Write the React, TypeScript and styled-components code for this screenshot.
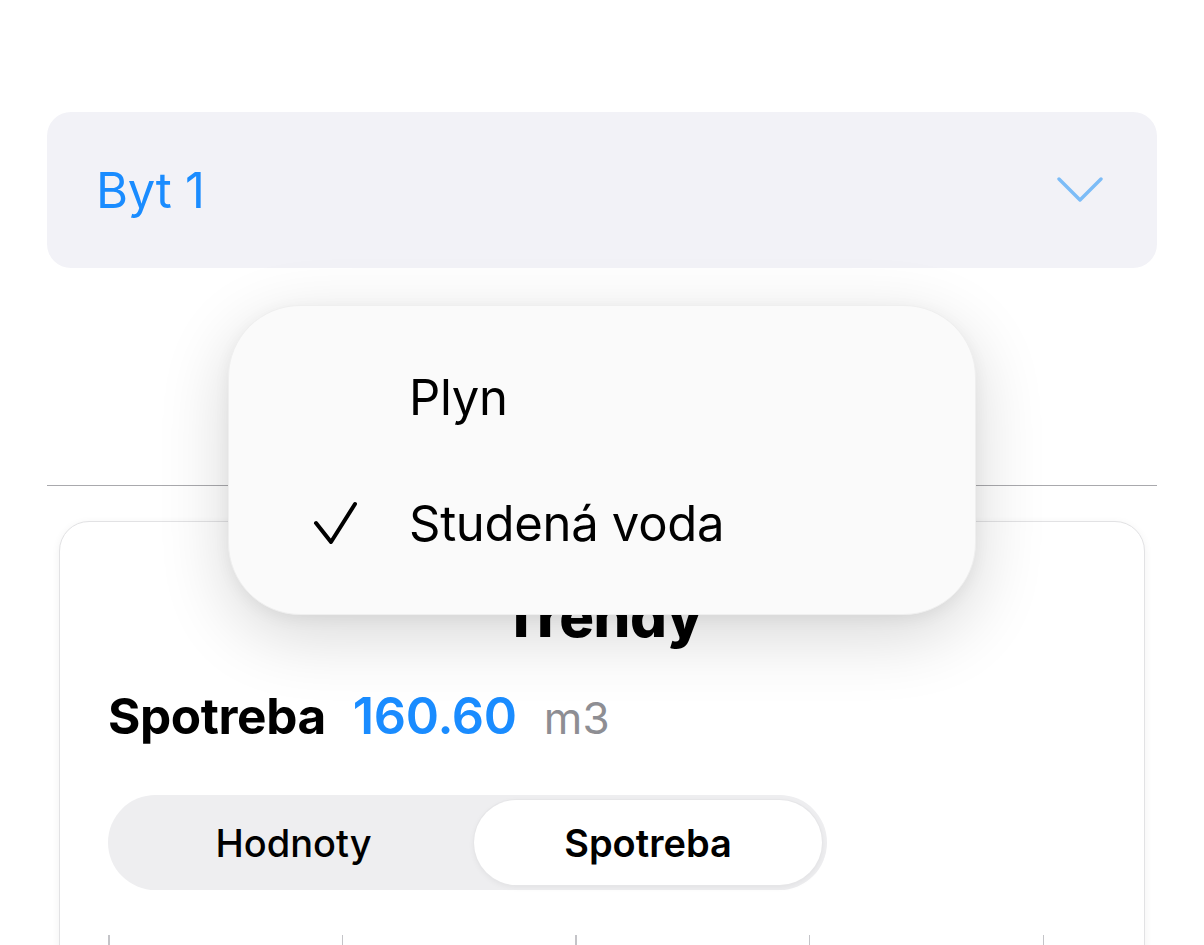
import React, { useState } from 'react';
import styled, { createGlobalStyle } from 'styled-components';

const GlobalStyle = createGlobalStyle`
  html, body {
    margin: 0;
    padding: 0;
    background: #ffffff;
    font-family: Inter, "Noto Sans", sans-serif;
    -webkit-font-smoothing: antialiased;
  }
`;

const Page = styled.div`
  position: relative;
  width: 1204px;
  height: 945px;
  overflow: hidden;
  box-sizing: border-box;
  padding: 112px 47px 0 47px;
  display: flex;
  flex-direction: column;
  & > * {
    flex-shrink: 0;
  }
`;

const Select = styled.div`
  height: 156px;
  border-radius: 24px;
  background: #f2f2f7;
  display: flex;
  align-items: center;
  justify-content: space-between;
  padding: 0 54px 0 49px;
`;

const SelectValue = styled.span`
  font-size: 49px;
  color: #1a8cff;
  letter-spacing: -0.3px;
`;

const Divider = styled.div`
  height: 1px;
  background: #a9a9ad;
  margin-top: 217px;
`;

const Card = styled.div`
  margin: 35px 12px 0 12px;
  background: #ffffff;
  border: 1.5px solid #e2e2e4;
  border-radius: 30px;
  box-shadow: 0 2px 8px rgba(0, 0, 0, 0.06);
  padding: 60px 48px 0 48px;
  display: flex;
  flex-direction: column;
  height: 600px;
`;

const CardTitle = styled.h2`
  margin: 0;
  text-align: center;
  font-size: 58px;
  font-weight: 800;
  line-height: 68px;
  color: #000;
  letter-spacing: -0.5px;
`;

const StatRow = styled.div`
  display: flex;
  align-items: baseline;
  gap: 27px;
  margin-top: 35px;
`;

const StatLabel = styled.span`
  font-size: 49.5px;
  font-weight: 700;
  color: #000;
  letter-spacing: -0.4px;
`;

const StatValue = styled.span`
  font-size: 50.5px;
  font-weight: 600;
  color: #1a8cff;
  letter-spacing: -0.3px;
`;

const StatUnit = styled.span`
  font-size: 44px;
  color: #8e8e93;
`;

const Segmented = styled.div`
  margin-top: 49px;
  width: 719px;
  height: 95px;
  box-sizing: border-box;
  border-radius: 48px;
  background: #eeeef0;
  padding: 5px;
  display: grid;
  grid-template-columns: 361fr 348fr;
`;

const Segment = styled.button<{ $active?: boolean }>`
  border: none;
  border-radius: 43px;
  font-family: inherit;
  font-size: 38px;
  font-weight: ${(p) => (p.$active ? 600 : 500)};
  color: #000;
  background: ${(p) => (p.$active ? '#ffffff' : 'transparent')};
  box-shadow: ${(p) => (p.$active ? '0 0 0 1px #e6e6e8, 0 2px 6px rgba(0,0,0,0.06)' : 'none')};
  cursor: pointer;
`;

const Ticks = styled.div`
  margin-top: 45px;
  width: 936px;
  display: flex;
  justify-content: space-between;
`;

const Tick = styled.div`
  width: 1.5px;
  height: 12px;
  background: #c4c4c8;
`;

const Menu = styled.div`
  position: absolute;
  left: 228px;
  top: 305px;
  width: 748px;
  height: 310px;
  box-sizing: border-box;
  border-radius: 72px;
  background: #fafafa;
  border: 1px solid #efefef;
  box-shadow: 0 20px 70px rgba(0, 0, 0, 0.16), 0 4px 16px rgba(0, 0, 0, 0.05);
  display: flex;
  flex-direction: column;
  justify-content: center;
  padding: 0 0 0 0;
`;

const MenuItem = styled.div`
  height: 126px;
  display: flex;
  align-items: center;
`;

const CheckSlot = styled.div`
  width: 180px;
  display: flex;
  justify-content: flex-end;
  padding-right: 50px;
  box-sizing: border-box;
`;

const MenuLabel = styled.span`
  font-size: 49px;
  color: #000;
  letter-spacing: -0.3px;
`;

const Chevron = () => (
  <svg width="46" height="28" viewBox="0 0 46 28" fill="none">
    <path d="M2 3 L23 24 L44 3" stroke="#7cbcf7" strokeWidth="3.4" strokeLinecap="round" strokeLinejoin="round" />
  </svg>
);

const Check = () => (
  <svg width="46" height="44" viewBox="0 0 46 44" fill="none">
    <path d="M3 22 L18 41 L42 3" stroke="#000" strokeWidth="4" strokeLinecap="round" strokeLinejoin="round" />
  </svg>
);

const options = ['Plyn', 'Studená voda'];

const App: React.FC = () => {
  const [selected, setSelected] = useState('Studená voda');
  const [tab, setTab] = useState('Spotreba');

  return (
    <Page>
      <GlobalStyle />
      <Select>
        <SelectValue>Byt 1</SelectValue>
        <Chevron />
      </Select>
      <Divider />
      <Card>
        <CardTitle>Trendy</CardTitle>
        <StatRow>
          <StatLabel>Spotreba</StatLabel>
          <StatValue>160.60</StatValue>
          <StatUnit>m3</StatUnit>
        </StatRow>
        <Segmented>
          {['Hodnoty', 'Spotreba'].map((t) => (
            <Segment key={t} $active={tab === t} onClick={() => setTab(t)}>
              {t}
            </Segment>
          ))}
        </Segmented>
        <Ticks>
          {[0, 1, 2, 3, 4].map((i) => (
            <Tick key={i} />
          ))}
        </Ticks>
      </Card>
      <Menu>
        {options.map((o) => (
          <MenuItem key={o} onClick={() => setSelected(o)}>
            <CheckSlot>{selected === o && <Check />}</CheckSlot>
            <MenuLabel>{o}</MenuLabel>
          </MenuItem>
        ))}
      </Menu>
    </Page>
  );
};

export default App;
